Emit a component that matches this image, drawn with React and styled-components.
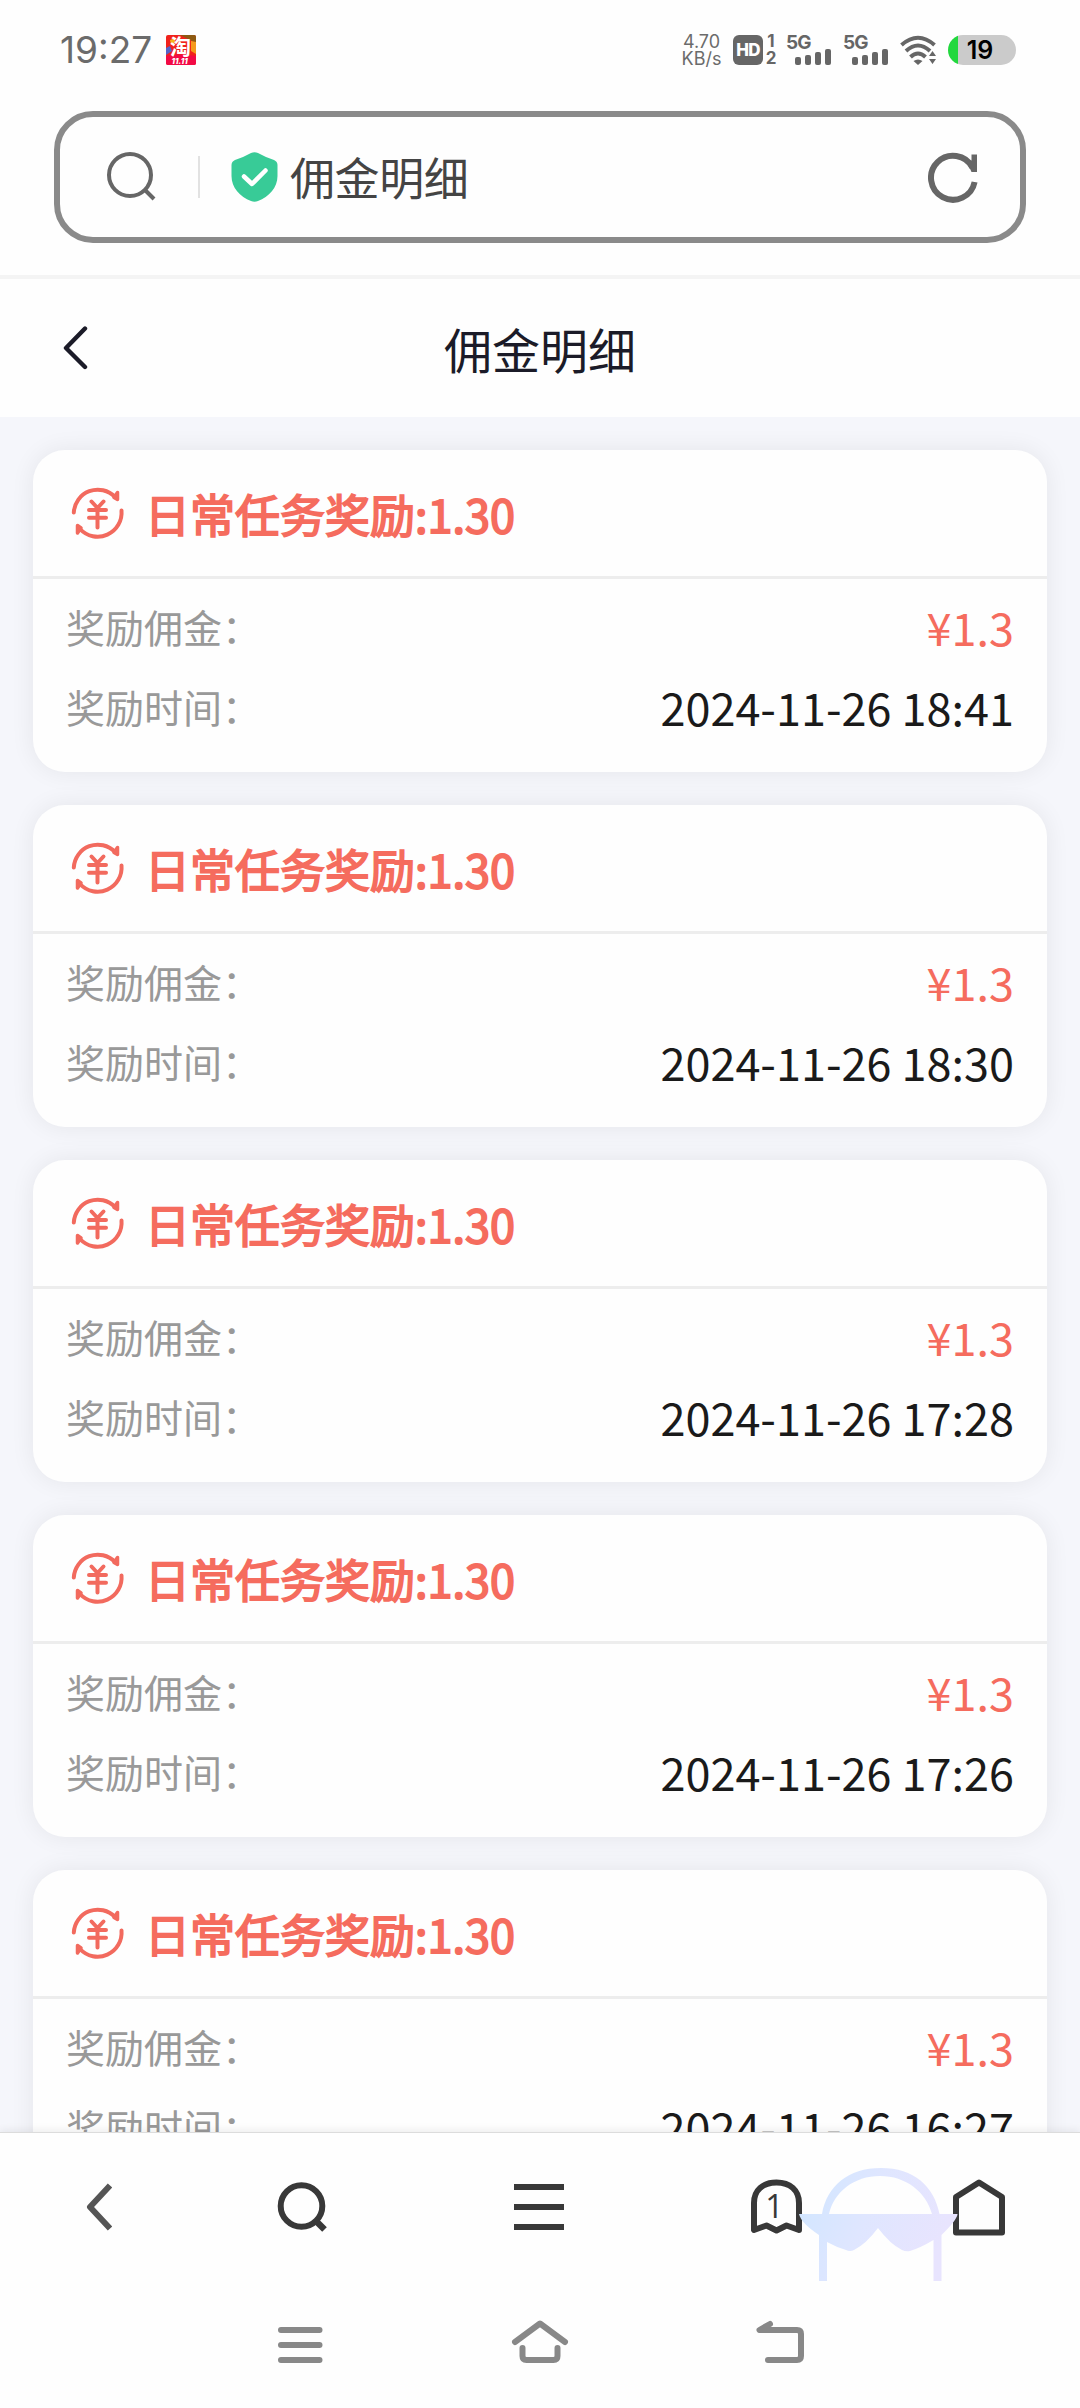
import React from 'react';
import styled, { createGlobalStyle } from 'styled-components';

const GlobalStyle = createGlobalStyle`
  * {
    box-sizing: border-box;
  }
  body {
    margin: 0;
    background: #fefefe;
    font-family: 'Noto Sans CJK SC', 'Noto Sans', sans-serif;
  }
  svg {
    display: block;
    flex: none;
  }
`;

const Screen = styled.div`
  width: 1080px;
  height: 2408px;
  display: flex;
  flex-direction: column;
  overflow: hidden;
  background: #fefefe;
`;

/* 状态栏 */
const StatusBar = styled.div`
  height: 99px;
  flex: none;
  display: flex;
  align-items: center;
  padding: 0 64px 0 60px;
  color: #666;
`;

const Clock = styled.div`
  width: 106px;
  font-family: Inter, sans-serif;
  font-size: 37px;
  line-height: 46px;
  white-space: nowrap;
  color: #6b6b6b;
`;

const StatusRight = styled.div`
  margin-left: auto;
  display: flex;
  align-items: center;
`;

const Speed = styled.div`
  width: 51px;
  display: flex;
  flex-direction: column;
  align-items: center;
  padding-right: 12px;
  font-family: Inter, sans-serif;
  font-size: 18px;
  line-height: 17px;
  color: #6b6b6b;
  white-space: nowrap;
`;

const HdBadge = styled.div`
  width: 30px;
  height: 30px;
  border-radius: 6px;
  display: flex;
  align-items: center;
  justify-content: center;
  background: #666;
  color: #fff;
  font-family: Inter, sans-serif;
  font-size: 17px;
  font-weight: 800;
  letter-spacing: -0.7px;
`;

const HdSlots = styled.div`
  width: 23px;
  padding: 0 10px 0 3px;
  display: flex;
  flex-direction: column;
  align-items: center;
  font-family: Inter, sans-serif;
  font-size: 17px;
  font-weight: 700;
  line-height: 17px;
`;

const SignalBlock = styled.div`
  width: 57px;
  height: 30px;
  display: flex;
  flex-direction: column;
  font-family: Inter, sans-serif;
  font-size: 19px;
  font-weight: 700;
  line-height: 15px;
  letter-spacing: -1px;
`;

const Bars = styled.div`
  display: flex;
  align-items: flex-end;
  gap: 4px;
  height: 16px;
  margin-top: -1px;
  padding-left: 9px;
`;

const Bar = styled.span`
  width: 6px;
  height: ${(props) => props.$h}px;
  border-radius: 2px;
  background: #666;
`;

const Battery = styled.div`
  width: 68px;
  height: 30px;
  margin-left: 12px;
  border-radius: 15px;
  display: flex;
  align-items: center;
  justify-content: center;
  padding-right: 4px;
  background: linear-gradient(to right, #22d83e 10px, #cbcbcb 10px);
  color: #000;
  font-family: Inter, sans-serif;
  font-size: 25px;
  font-weight: 600;
`;

/* 地址栏 */
const AddressWrap = styled.div`
  height: 180px;
  flex: none;
  padding: 12px 54px 0;
  border-bottom: 4px solid #f4f4f4;
`;

const AddressBox = styled.div`
  height: 132px;
  border: 6px solid #8a8a8a;
  border-radius: 39px;
  display: flex;
  align-items: center;
  padding: 0 42px 0 46px;
`;

const Separator = styled.div`
  width: 2px;
  height: 42px;
  margin: 0 31px 0 42px;
  background: #e2e2e2;
`;

const AddressText = styled.div`
  flex: 1;
  margin-left: 12px;
  font-size: 45px;
  line-height: 60px;
  letter-spacing: -0.4px;
  color: #444;
`;

/* 页面标题 */
const PageHeader = styled.header`
  height: 138px;
  flex: none;
  display: grid;
  grid-template-columns: 120px 1fr 120px;
  align-items: center;
`;

const BackButton = styled.div`
  padding-left: 62px;
`;

const PageTitle = styled.div`
  text-align: center;
  font-size: 48px;
  line-height: 70px;
  color: #1b1b28;
`;

/* 列表 */
const List = styled.main`
  flex: 1;
  min-height: 0;
  overflow: hidden;
  display: flex;
  flex-direction: column;
  gap: 33px;
  padding: 33px 33px 0;
  background: #f5f6fb;
`;

const Card = styled.section`
  flex: none;
  height: 322px;
  border-radius: 32px;
  background: #fefefe;
  box-shadow: 0 0 24px rgba(0, 0, 0, 0.07);
`;

const CardHead = styled.div`
  height: 129px;
  display: flex;
  align-items: center;
  gap: 20px;
  padding-left: 38px;
  border-bottom: 3px solid #ededed;
`;

const CardTitle = styled.div`
  padding-top: 2px;
  font-size: 45px;
  line-height: 60px;
  color: #f56c5e;
  -webkit-text-stroke: 1.8px #f56c5e;
`;

const CardBody = styled.div`
  padding: 7px 33px 26px;
`;

const Row = styled.div`
  height: 80px;
  display: flex;
  align-items: center;
  justify-content: space-between;
`;

const Label = styled.span`
  font-size: 39px;
  line-height: 56px;
  color: #999;
`;

const Value = styled.span`
  padding-top: 2px;
  font-size: 45px;
  line-height: 56px;
  color: ${(props) => (props.$price ? '#f56c5e' : '#1a1a1a')};
`;

/* 底部工具栏 */
const Toolbar = styled.nav`
  position: relative;
  height: 149px;
  flex: none;
  display: grid;
  grid-template-columns: 198px 208px 266px 208px 198px;
  justify-items: center;
  align-items: center;
  background: #fefefe;
  border-top: 1px solid #dcdcdc;
  box-shadow: 0 -2px 8px rgba(0, 0, 0, 0.07);
`;

const TabCount = styled.div`
  position: relative;
  display: flex;
`;

const TabNumber = styled.span`
  position: absolute;
  inset: 0 3px 3px 0;
  display: flex;
  align-items: center;
  justify-content: center;
  font-family: 'Open Sans', sans-serif;
  font-size: 32px;
  font-weight: 500;
  color: #383838;
`;

const Mascot = styled.div`
  position: absolute;
  left: 798px;
  top: 34px;
`;

const SystemBar = styled.div`
  position: relative;
  height: 127px;
  flex: none;
  display: flex;
  justify-content: center;
  padding-top: 36px;
  background: #fefefe;
`;

const SystemButton = styled.div`
  width: 240px;
  display: flex;
  justify-content: center;
`;

const AppIcon = () => (
  <svg width="30" height="30" viewBox="0 0 30 30">
    <rect width="30" height="30" rx="2" fill="#f0221c" />
    <path d="M14 0h14a2 2 0 0 1 2 2v6z" fill="#8d5a12" />
    <path d="M25 6l5 1v12l-5-3z" fill="#f59a1c" />
    <path d="M0 13l4-2 2 5-6 4z" fill="#5463c8" />
    <path d="M4 5l5-2v4l-4 3z" fill="#f7b21a" />
    <path d="M0 21q15-3 30 0v7a2 2 0 0 1-2 2H2a2 2 0 0 1-2-2z" fill="#f20a45" />
    <text x="4" y="18.5" fontSize="21" fontWeight="700" fill="#fff" fontFamily="Noto Sans CJK SC">淘</text>
    <text x="5.5" y="29" fontSize="8" fontWeight="800" fontStyle="italic" fill="#fff" fontFamily="Inter">11.11</text>
  </svg>
);

const WifiIcon = () => (
  <svg width="36" height="30" viewBox="0 0 36 30" fill="none" stroke="#666" strokeWidth="4">
    <path d="M1.5 10Q18-4.500 34.500 10" />
    <path d="M6 16Q18 5 30 16" />
    <path d="M10.500 22Q18 15 25.500 22" />
    <path d="M13.500 26q4.500-3 9 0L18 30z" fill="#666" stroke="none" />
    <path d="M29 21l3.500-5 3.500 5zM29 24l3.500 5 3.500-5z" fill="#666" stroke="none" />
  </svg>
);

const AddressSearchIcon = () => (
  <svg width="50" height="50" viewBox="0 0 50 50" fill="none" stroke="#666" strokeWidth="4">
    <circle cx="24" cy="23" r="21" />
    <path d="M39 38l9 9" />
  </svg>
);

const ShieldIcon = () => (
  <svg width="47" height="50" viewBox="0 0 47 50">
    <path
      d="M20 1Q23.500-.500 27 1Q34 5 43 8Q46.500 9.500 46.500 13V24C46.500 36 38 44.500 27 49Q23.500 50.500 20 49C9 44.500.500 36 .500 24V13Q.500 9.500 4 8Q13 5 20 1z"
      fill="#38cb97"
    />
    <path d="M13 24.500l8 7.500L34.500 18.500" fill="none" stroke="#fff" strokeWidth="4.500" strokeLinecap="round" strokeLinejoin="round" />
  </svg>
);

const RefreshIcon = () => (
  <svg width="50" height="51" viewBox="0 0 50 51" fill="none" stroke="#666" strokeWidth="6">
    <path d="M46.600 30A22 22 0 1 1 44.500 15.500" />
    <path d="M43.500 2.500H49V20H43.500L39 10L43.500 8.500z" fill="#666" stroke="none" />
  </svg>
);

const HeaderBackIcon = () => (
  <svg width="27" height="44" viewBox="0 0 27 44" fill="none" stroke="#1b1b28" strokeWidth="4.400" strokeLinecap="round" strokeLinejoin="round">
    <path d="M23 2.500L4 22l19 19" />
  </svg>
);

const CoinIcon = () => (
  <svg width="54" height="54" viewBox="0 0 54 54" fill="none" stroke="#f26a5e" strokeWidth="4" strokeLinecap="round" strokeLinejoin="round">
    <path d="M2.800 26.500A24 24 0 0 1 44 11" />
    <path d="M46.500 6.500v7l-3.500-2z" fill="#f26a5e" strokeWidth="3.500" />
    <path d="M50.500 24.500A24 24 0 0 1 9 43" />
    <path d="M6.500 47v-7.500l3.500 2.500z" fill="#f26a5e" strokeWidth="3.500" />
    <path d="M20.500 15.500l6 6.500 6-6.500M26.500 22v19.500M18 24h17M18 31.800h17" />
  </svg>
);

const NavBackIcon = () => (
  <svg width="26" height="48" viewBox="0 0 26 48" fill="none" stroke="#555" strokeWidth="6">
    <path d="M24 2.500L4 24l20 21.500" strokeLinejoin="round" />
  </svg>
);

const NavSearchIcon = () => (
  <svg width="52" height="52" viewBox="0 0 52 52" fill="none" stroke="#383838" strokeWidth="6">
    <circle cx="25.500" cy="25" r="20.800" />
    <path d="M39.500 39.500l9 9" strokeWidth="6.500" />
  </svg>
);

const NavMenuIcon = () => (
  <svg width="50" height="46" viewBox="0 0 50 46" fill="#383838">
    <path d="M0 0h50v6H0zM0 20h50v6H0zM0 40h50v6H0z" />
  </svg>
);

const GhostIcon = () => (
  <svg width="51" height="56" viewBox="0 0 51 56" fill="none" stroke="#383838" strokeWidth="6" strokeLinejoin="round">
    <path d="M3 24C3 11 12 3.500 25.500 3.500S48 11 48 24V51L35.500 46.500L25.500 51.500L15.500 46.500L3 51z" />
  </svg>
);

const HomeIcon = () => (
  <svg width="52" height="57" viewBox="0 0 52 57" fill="none" stroke="#383838" strokeWidth="6" strokeLinejoin="round">
    <path d="M3 18L26 3.500L49 18V53.500H3z" />
  </svg>
);

const MascotIcon = () => (
  <svg width="162" height="118" viewBox="0 0 162 118">
    <defs>
      <linearGradient id="mascot" x1="0" x2="1" y1="0" y2="0.300">
        <stop offset="0" stopColor="#cfe6ff" />
        <stop offset="0.500" stopColor="#dfe6ff" />
        <stop offset="1" stopColor="#e8e4fe" />
      </linearGradient>
    </defs>
    <path
      d="M24 47C29 19 50 1 83 1S136 19 141.500 47H159.500Q159 53 143.500 68V115H135.500V73Q122 81 112 84Q108 85 104 83Q92 77 80 61Q68 77 56 83Q52 85 48 83Q38 80 29 75V115H21V68Q3 56 1 47zM31 47H134C128 25 108 9 82 9S36 25 31 47z"
      fill="url(#mascot)"
      fillRule="evenodd"
    />
  </svg>
);

const SysMenuIcon = () => (
  <svg width="46" height="50" viewBox="0 0 46 50" stroke="#888" strokeWidth="6" strokeLinecap="round">
    <path d="M4 13h38.500M4 28h38.500M4 43h38.500" />
  </svg>
);

const SysHomeIcon = () => (
  <svg width="58" height="50" viewBox="0 0 58 50" fill="none" stroke="#888" strokeWidth="6" strokeLinecap="round" strokeLinejoin="round">
    <path d="M4 25L29 6.500L54 25" />
    <path d="M11.500 31v8q0 4 4 4h27q4 0 4-4v-8" />
  </svg>
);

const SysBackIcon = () => (
  <svg width="50" height="50" viewBox="0 0 50 50" fill="none" stroke="#888" strokeWidth="6" strokeLinecap="round" strokeLinejoin="round">
    <path d="M15 7L4.500 13H42q4 0 4 4v22q0 4-4 4H13" />
  </svg>
);

const Signal = () => (
  <SignalBlock>
    5G
    <Bars>
      <Bar $h={8} />
      <Bar $h={10} />
      <Bar $h={13} />
      <Bar $h={16} />
    </Bars>
  </SignalBlock>
);

const times = [
  '2024-11-26 18:41',
  '2024-11-26 18:30',
  '2024-11-26 17:28',
  '2024-11-26 17:26',
  '2024-11-26 16:27',
];

const RewardCard = ({ time }) => {
  return (
    <Card>
      <CardHead>
        <CoinIcon />
        <CardTitle>日常任务奖励:1.30</CardTitle>
      </CardHead>
      <CardBody>
        <Row>
          <Label>奖励佣金：</Label>
          <Value $price>¥1.3</Value>
        </Row>
        <Row>
          <Label>奖励时间：</Label>
          <Value>{time}</Value>
        </Row>
      </CardBody>
    </Card>
  );
};

const App = () => {
  return (
    <>
      <GlobalStyle />
      <Screen>
        <StatusBar>
          <Clock>19:27</Clock>
          <AppIcon />
          <StatusRight>
            <Speed>
              <span>4.70</span>
              <span>KB/s</span>
            </Speed>
            <HdBadge>HD</HdBadge>
            <HdSlots>
              <span>1</span>
              <span>2</span>
            </HdSlots>
            <Signal />
            <Signal />
            <WifiIcon />
            <Battery>19</Battery>
          </StatusRight>
        </StatusBar>
        <AddressWrap>
          <AddressBox>
            <AddressSearchIcon />
            <Separator />
            <ShieldIcon />
            <AddressText>佣金明细</AddressText>
            <RefreshIcon />
          </AddressBox>
        </AddressWrap>
        <PageHeader>
          <BackButton>
            <HeaderBackIcon />
          </BackButton>
          <PageTitle>佣金明细</PageTitle>
        </PageHeader>
        <List>
          {times.map((time) => (
            <RewardCard key={time} time={time} />
          ))}
        </List>
        <Toolbar>
          <NavBackIcon />
          <NavSearchIcon />
          <NavMenuIcon />
          <TabCount>
            <GhostIcon />
            <TabNumber>1</TabNumber>
          </TabCount>
          <HomeIcon />
          <Mascot>
            <MascotIcon />
          </Mascot>
        </Toolbar>
        <SystemBar>
          <SystemButton>
            <SysMenuIcon />
          </SystemButton>
          <SystemButton>
            <SysHomeIcon />
          </SystemButton>
          <SystemButton>
            <SysBackIcon />
          </SystemButton>
        </SystemBar>
      </Screen>
    </>
  );
};

export default App;
